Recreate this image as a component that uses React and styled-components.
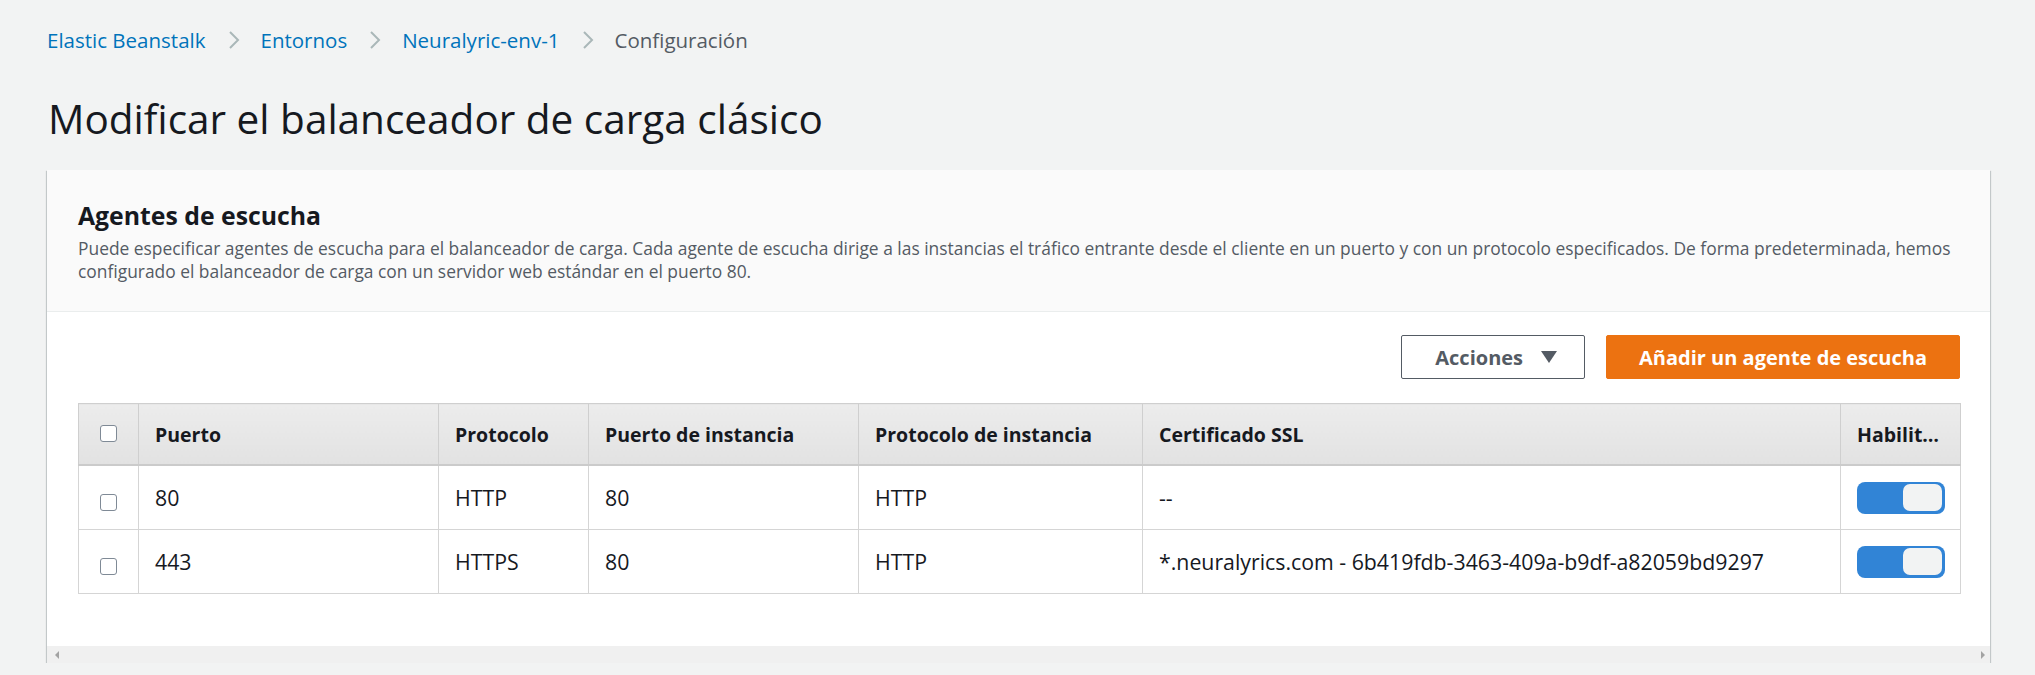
import React from 'react';
import styled, { createGlobalStyle } from 'styled-components';

const GlobalStyle = createGlobalStyle`
  body {
    margin: 0;
    background: #f2f3f3;
    font-family: "Open Sans", "Noto Sans", sans-serif;
    color: #16191f;
  }
`

const Page = styled.div`
  padding: 20px 45px 0 47px;
`

const Crumbs = styled.nav`
  display: flex;
  align-items: center;
  height: 40px;
  font-size: 20.5px;
  line-height: 40px;
`

const Crumb = styled.span`
  color: ${p => (p.current ? '#545b64' : '#0073bb')};
`

const Chevron = styled.svg`
  width: 12px;
  height: 20px;
  margin: 0 21px 0 22px;
`

const Title = styled.h1`
  margin: 37px 0 29px 1px;
  font-size: 40.5px;
  line-height: 44px;
  font-weight: 400;
  color: #16191f;
`

const Card = styled.section`
  background: #fff;
  box-shadow: 0 1px 1px 0 rgba(0, 28, 36, 0.3), 1px 1px 1px 0 rgba(0, 28, 36, 0.15),
    -1px 1px 1px 0 rgba(0, 28, 36, 0.15);
`

const CardHeader = styled.header`
  background: #fafafa;
  border-bottom: 1px solid #eaeded;
  padding: 30px 30px 28px 31px;
`

const CardTitle = styled.h2`
  margin: 0;
  font-size: 24.8px;
  line-height: 30px;
  font-weight: 700;
`

const Description = styled.p`
  margin: 7px 0 0;
  font-size: 17.4px;
  line-height: 23px;
  color: #545b64;
`

const CardBody = styled.div`
  padding: 23px 30px 52px 31px;
`

const Toolbar = styled.div`
  display: flex;
  justify-content: flex-end;
  gap: 21px;
  margin-bottom: 24px;
`

const Button = styled.button`
  height: 44px;
  display: flex;
  align-items: center;
  gap: 18px;
  border-radius: 2px;
  font-family: inherit;
  font-size: 20px;
  font-weight: 700;
  padding: ${p => (p.primary ? '0 32px' : '0 27px 0 33px')};
  background: ${p => (p.primary ? '#ec7211' : '#fff')};
  color: ${p => (p.primary ? '#fff' : '#545b64')};
  border: 1px solid ${p => (p.primary ? '#ec7211' : '#545b64')};
`

const Caret = styled.svg`
  width: 16px;
  height: 12px;
`

const Table = styled.table`
  width: 100%;
  table-layout: fixed;
  border-collapse: collapse;
  border: 1px solid #cfcfcf;
  font-size: 21.3px;
`

const Th = styled.th`
  height: 60px;
  padding: 0 16px;
  text-align: ${p => (p.center ? 'center' : 'left')};
  font-size: 19.5px;
  font-weight: 700;
  color: #16191f;
  background: linear-gradient(#ececec, #e2e2e2);
  border: 1px solid #cfcfcf;
  border-bottom: 2px solid #cbcbcb;
  white-space: nowrap;
  overflow: hidden;
  text-overflow: ellipsis;
`

const Td = styled.td`
  height: 63px;
  padding: 0 16px;
  text-align: ${p => (p.center ? 'center' : 'left')};
  border: 1px solid #d5d5d5;
  white-space: nowrap;
`

const Check = styled.span`
  display: inline-block;
  vertical-align: middle;
  width: 15px;
  height: 15px;
  border: 1.5px solid #7f8a96;
  border-radius: 3px;
  background: #fff;
  margin-top: ${p => (p.head ? '-6px' : '4px')};
`

const Toggle = styled.span`
  display: flex;
  justify-content: flex-end;
  align-items: center;
  width: 88px;
  height: 32px;
  box-sizing: border-box;
  padding: 0 3px;
  border-radius: 8px;
  background: #3184d6;
`

const Knob = styled.span`
  width: 39px;
  height: 27px;
  border-radius: 7px;
  background: #f2f3f3;
`

const ScrollStrip = styled.div`
  display: flex;
  justify-content: space-between;
  align-items: center;
  height: 17px;
  padding: 0 5px 0 8px;
  background: #f0f0f0;
`

const Arrow = styled.span`
  width: 0;
  height: 0;
  border-top: 4px solid transparent;
  border-bottom: 4px solid transparent;
  ${p => (p.right ? 'border-left: 4px solid #a3a3a3;' : 'border-right: 4px solid #a3a3a3;')}
`

const columns = [
  { label: '', width: 60 },
  { label: 'Puerto', width: 300 },
  { label: 'Protocolo', width: 150 },
  { label: 'Puerto de instancia', width: 270 },
  { label: 'Protocolo de instancia', width: 284 },
  { label: 'Certificado SSL', width: 698 },
  { label: 'Habilitado', width: 120 },
]

const listeners = [
  { port: '80', protocol: 'HTTP', instancePort: '80', instanceProtocol: 'HTTP', cert: '--' },
  {
    port: '443',
    protocol: 'HTTPS',
    instancePort: '80',
    instanceProtocol: 'HTTP',
    cert: '*.neuralyrics.com - 6b419fdb-3463-409a-b9df-a82059bd9297',
  },
]

const crumbs = ['Elastic Beanstalk', 'Entornos', 'Neuralyric-env-1']

export default function App() {
  return (
    <Page>
      <GlobalStyle />
      <Crumbs>
        {crumbs.map(c => (
          <React.Fragment key={c}>
            <Crumb>{c}</Crumb>
            <Chevron viewBox="0 0 12 20">
              <path d="M2 2l8 8-8 8" fill="none" stroke="#aab7b8" strokeWidth="2" />
            </Chevron>
          </React.Fragment>
        ))}
        <Crumb current>Configuración</Crumb>
      </Crumbs>

      <Title>Modificar el balanceador de carga clásico</Title>

      <Card>
        <CardHeader>
          <CardTitle>Agentes de escucha</CardTitle>
          <Description>
            Puede especificar agentes de escucha para el balanceador de carga. Cada agente de escucha dirige a las
            instancias el tráfico entrante desde el cliente en un puerto y con un protocolo especificados. De forma
            predeterminada, hemos configurado el balanceador de carga con un servidor web estándar en el puerto 80.
          </Description>
        </CardHeader>

        <CardBody>
          <Toolbar>
            <Button>
              Acciones
              <Caret viewBox="0 0 16 12">
                <path d="M0 0h16L8 12z" fill="#545b64" />
              </Caret>
            </Button>
            <Button primary>Añadir un agente de escucha</Button>
          </Toolbar>

          <Table>
            <colgroup>
              {columns.map((c, i) => (
                <col key={i} style={{ width: c.width }} />
              ))}
            </colgroup>
            <thead>
              <tr>
                <Th center><Check head /></Th>
                {columns.slice(1).map(c => (
                  <Th key={c.label}>{c.label}</Th>
                ))}
              </tr>
            </thead>
            <tbody>
              {listeners.map(l => (
                <tr key={l.port}>
                  <Td center><Check /></Td>
                  <Td>{l.port}</Td>
                  <Td>{l.protocol}</Td>
                  <Td>{l.instancePort}</Td>
                  <Td>{l.instanceProtocol}</Td>
                  <Td>{l.cert}</Td>
                  <Td>
                    <Toggle><Knob /></Toggle>
                  </Td>
                </tr>
              ))}
            </tbody>
          </Table>
        </CardBody>

        <ScrollStrip>
          <Arrow />
          <Arrow right />
        </ScrollStrip>
      </Card>
    </Page>
  )
}
